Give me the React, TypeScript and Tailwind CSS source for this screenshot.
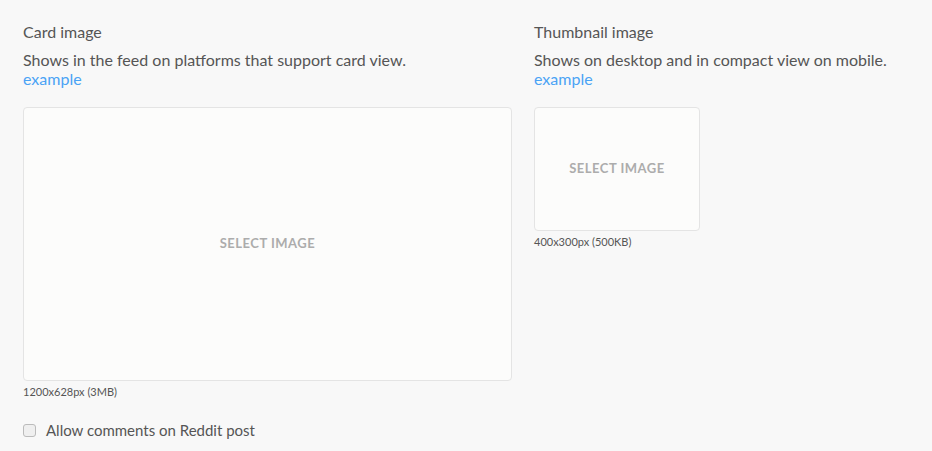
import React from "react";

export default function App() {
  return (
    <div
      className="w-[932px] h-[451px] bg-[#f8f8f8] text-[#555555] overflow-hidden"
      style={{ fontFamily: "Lato, 'Liberation Sans', sans-serif" }}
    >
      <div className="flex gap-[22px] pl-[23px] pt-[22px]">
        <div className="flex flex-col w-[489px]">
          <div className="text-[16px] leading-[19px]">Card image</div>
          <div className="text-[16px] leading-[19px] mt-[9px]">
            Shows in the feed on platforms that support card view.
          </div>
          <a className="text-[16px] leading-[19px] text-[#4aa3f5]">example</a>
          <div className="mt-[19px] h-[274px] w-[489px] bg-[#fcfcfb] border border-[#e4e4e4] rounded-[4px] flex items-center justify-center">
            <span className="text-[13px] font-bold text-[#acacac] tracking-[0.5px]">SELECT IMAGE</span>
          </div>
          <div className="text-[11px] leading-[14px] mt-[4px]">1200x628px (3MB)</div>
          <label className="flex items-center gap-[10px] mt-[22px]">
            <span className="w-[13px] h-[13px] border border-[#bbbbbb] rounded-[3px] bg-[#efefef]" />
            <span className="text-[15px] leading-[18px]">Allow comments on Reddit post</span>
          </label>
        </div>
        <div className="flex flex-col">
          <div className="text-[16px] leading-[19px]">Thumbnail image</div>
          <div className="text-[16px] leading-[19px] mt-[9px]">
            Shows on desktop and in compact view on mobile.
          </div>
          <a className="text-[16px] leading-[19px] text-[#4aa3f5]">example</a>
          <div className="mt-[19px] h-[124px] w-[166px] bg-[#fcfcfb] border border-[#e4e4e4] rounded-[4px] flex items-center justify-center">
            <span className="text-[13px] font-bold text-[#acacac] tracking-[0.5px]">SELECT IMAGE</span>
          </div>
          <div className="text-[11px] leading-[14px] mt-[4px]">400x300px (500KB)</div>
        </div>
      </div>
    </div>
  );
}
